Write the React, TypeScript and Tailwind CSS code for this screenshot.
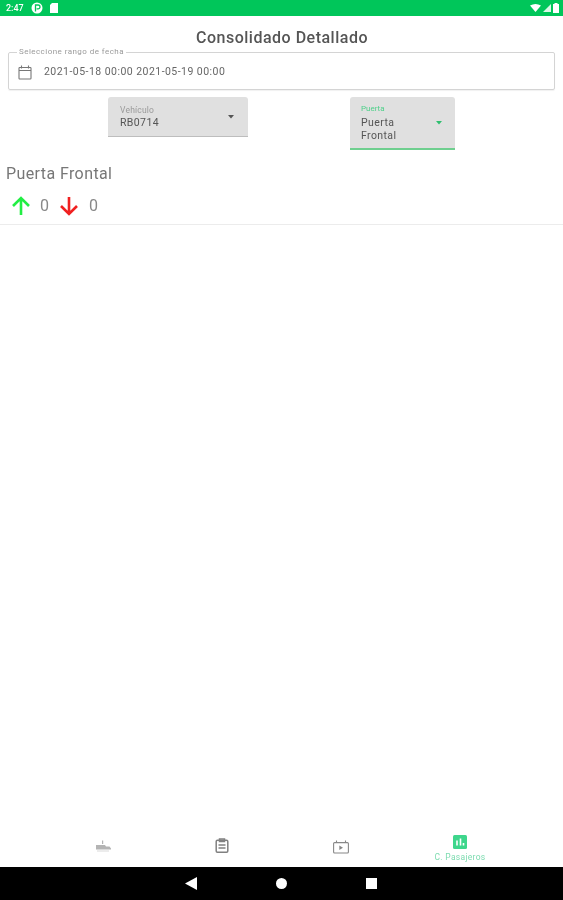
import React from "react";

function Caret({ color }: { color: string }) {
  return (
    <svg width="6" height="4" viewBox="0 0 6 4" className="shrink-0">
      <path d="M0 0h6L3 3.6z" fill={color} />
    </svg>
  );
}

function ArrowUp() {
  return (
    <svg width="20" height="20" viewBox="0 0 20 20" fill="none" stroke="#22ee44" strokeWidth="2.6">
      <path d="M10 19V2M2 10l8-8 8 8" />
    </svg>
  );
}

function ArrowDown() {
  return (
    <svg width="20" height="20" viewBox="0 0 20 20" fill="none" stroke="#f02020" strokeWidth="2.6">
      <path d="M10 1v17M2 10l8 8 8-8" />
    </svg>
  );
}

export default function App() {
  return (
    <div className="flex h-[900px] w-[563px] flex-col overflow-hidden bg-white font-['Roboto',sans-serif] blur-[0.5px]">
      {/* status bar */}
      <div className="flex h-4 items-center justify-between bg-[#00c65a] pl-[6px] pr-[4px] text-white">
        <div className="flex items-center gap-[7px]">
          <span className="text-[9px] font-medium leading-none">2:47</span>
          <svg width="12" height="12" viewBox="0 0 12 12">
            <circle cx="6" cy="6" r="5.5" fill="#fff" />
            <path d="M4.5 9.5V3h2.6a1.8 1.8 0 0 1 0 3.8H5.6" fill="none" stroke="#00c65a" strokeWidth="1.3" />
          </svg>
          <svg width="8" height="10" viewBox="0 0 8 10">
            <path d="M2 0h6v10H0V2z" fill="#fff" />
          </svg>
        </div>
        <div className="flex items-center gap-[2px]">
          <svg width="11" height="8" viewBox="0 0 11 8">
            <path d="M0 1.5Q5.5-1.5 11 1.5L5.5 8z" fill="#fff" />
          </svg>
          <svg width="8" height="8" viewBox="0 0 8 8">
            <path d="M8 0v8H0z" fill="#fff" opacity="0.85" />
          </svg>
          <svg width="6" height="10" viewBox="0 0 6 10">
            <path d="M1.5 1V0h3v1H6v9H0V1z" fill="#fff" />
          </svg>
        </div>
      </div>

      {/* title */}
      <h1 className="mt-[12px] pl-[1px] text-center text-base font-medium leading-5 tracking-[0.5px] text-[#555]">
        Consolidado Detallado
      </h1>

      {/* date range */}
      <fieldset className="mx-2 h-[42px] rounded-[2px] border border-[#d4d4d4] pl-[9px] shadow-[0_1px_1px_rgba(0,0,0,0.06)]">
        <legend className="-ml-[1px] px-[2px] text-[8px] leading-[8px] tracking-[0.45px] text-[#9a9a9a]">
          Seleccione rango de fecha
        </legend>
        <div className="flex items-center gap-[12px] pt-[8px]">
          <svg width="14" height="15" viewBox="0 0 14 15" fill="none" stroke="#777" strokeWidth="1.1">
            <rect x="1" y="2.5" width="12" height="11.5" rx="0.8" />
            <path d="M1 5.5h12M3.5 0.5v3M10.5 0.5v3" />
          </svg>
          <span className="text-[10.5px] leading-4 tracking-[0.46px] text-[#666]">2021-05-18 00:00 2021-05-19 00:00</span>
        </div>
      </fieldset>

      {/* selects */}
      <div className="mt-[7px] flex items-start gap-[102px] pl-[108px]">
        <div className="flex h-10 w-[140px] items-center justify-between rounded-t-[3px] border-b border-[#bdbdbd] bg-[#e0e0e0] pl-[12px] pr-[14px]">
          <div className="flex flex-col pt-[2px]">
            <span className="text-[8.5px] leading-[10px] tracking-[0.2px] text-[#9a9a9a]">Vehículo</span>
            <span className="mt-[1px] text-[10.5px] leading-[14px] tracking-[0.4px] text-[#555]">RB0714</span>
          </div>
          <Caret color="#555" />
        </div>
        <div className="flex h-[53px] w-[105px] items-center justify-between rounded-t-[3px] border-b-2 border-[#6fcf8f] bg-[#e0e0e0] pl-[11px] pr-[13px]">
          <div className="flex flex-col pt-[1px]">
            <span className="text-[8px] leading-[10px] text-[#4fd08a]">Puerta</span>
            <span className="mt-[2px] text-[10.5px] leading-[13px] tracking-[0.4px] text-[#555]">
              Puerta
              <br />
              Frontal
            </span>
          </div>
          <Caret color="#2fbf6f" />
        </div>
      </div>

      {/* door summary */}
      <div className="border-b border-[#ececec] pl-[6px]">
        <h2 className="mt-[14px] text-base font-normal leading-5 tracking-[0.4px] text-[#777]">Puerta Frontal</h2>
        <div className="mt-[12px] flex h-[20px] items-center pl-[5px] text-base text-[#888]">
          <ArrowUp />
          <span className="ml-[9px] mr-[10px]">0</span>
          <ArrowDown />
          <span className="ml-[10px]">0</span>
        </div>
        <div className="h-[8px]" />
      </div>

      <div className="flex-1" />

      {/* bottom nav */}
      <nav className="grid h-[41px] grid-cols-[repeat(4,119px)] items-start pl-[43.5px]">
        <div className="flex justify-center pt-[14px]">
          <svg width="16" height="12" viewBox="0 0 16 12" fill="#b4b4b4">
            <path d="M7 0.5h1.2V4H7zM1 5h9l1 1.5h3.5L16 8.5v1H1z" />
            <path d="M2 10.5h12v1H2z" opacity="0.5" />
          </svg>
        </div>
        <div className="flex justify-center pt-[12px]">
          <svg width="14" height="15" viewBox="0 0 14 15" fill="none" stroke="#808080" strokeWidth="1.5">
            <rect x="1.2" y="2.2" width="11.6" height="12" rx="1.2" />
            <path d="M4.5 1h5v2.5h-5zM3.5 7h7M3.5 10h7" />
          </svg>
        </div>
        <div className="flex justify-center pt-[14px]">
          <svg width="16" height="14" viewBox="0 0 16 14" fill="none" stroke="#888" strokeWidth="1.1">
            <rect x="0.6" y="2.6" width="14.8" height="10.4" rx="1" />
            <path d="M3.5 0.5v2M12.5 0.5v2" />
            <path d="M6.3 5.5v4.4L10 7.7z" fill="#888" stroke="none" />
          </svg>
        </div>
        <div className="flex flex-col items-center pt-[9px]">
          <svg width="14" height="14" viewBox="0 0 14 14">
            <rect width="14" height="14" rx="1.5" fill="#3ed68c" />
            <path d="M4 10.5V5.5M7.5 10.5V3.5M10.5 10.5V8" stroke="#fff" strokeWidth="1.6" />
          </svg>
          <span className="mt-[3px] text-[8.5px] leading-[10px] tracking-[0.3px] text-[#7ddcb0]">C. Pasajeros</span>
        </div>
      </nav>

      {/* android nav */}
      <div className="flex h-[33px] items-center justify-center gap-[79px] bg-black pr-[1px]">
        <svg width="12" height="13" viewBox="0 0 12 13">
          <path d="M0 6.5L12 0v13z" fill="#fff" />
        </svg>
        <div className="h-[11px] w-[11px] rounded-full bg-white" />
        <div className="h-[11px] w-[11px] bg-white" />
      </div>
    </div>
  );
}
